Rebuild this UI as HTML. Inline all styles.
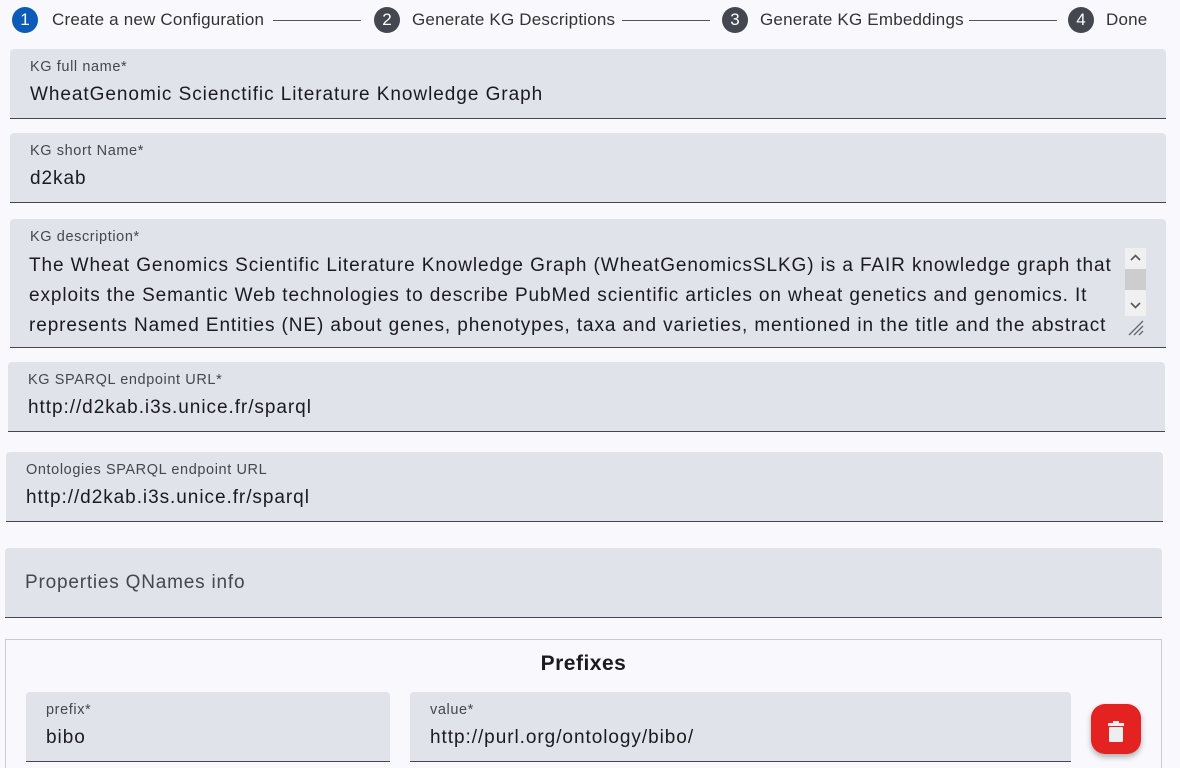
<!DOCTYPE html>
<html style="overflow:hidden;height:768px"><head><style>
body{margin:0;width:1180px;height:768px;overflow:hidden;background:#f9f9fd;font-family:"Liberation Sans",Arial,sans-serif;position:relative;color:#1b1b1f}
.c{position:absolute;top:7px;width:26px;height:26px;border-radius:50%;background:#44474f;color:#fff;font-size:17px;text-align:center;line-height:26px}
.t{position:absolute;top:10px;font-size:17px;color:#333;letter-spacing:0.2px}
.ln{position:absolute;top:20px;height:1px;background:#555}
.f{position:absolute;background:#e0e3ea;border-radius:4px 4px 0 0;border-bottom:1px solid #44474f;box-sizing:border-box}
.lb{position:absolute;left:20px;top:10px;font-size:14.5px;color:#44474f;letter-spacing:0.6px}
.v{position:absolute;left:20px;top:35px;font-size:19px;color:#1b1b1f;letter-spacing:0.95px}
</style></head><body>
<div class="c" style="left:12px;background:#0b5cb8">1</div><div class="t" style="left:52px">Create a new Configuration</div>
<div class="ln" style="left:273px;width:88px"></div>
<div class="c" style="left:374px">2</div><div class="t" style="left:412px">Generate KG Descriptions</div>
<div class="ln" style="left:622px;width:88px"></div>
<div class="c" style="left:722px">3</div><div class="t" style="left:760px">Generate KG Embeddings</div>
<div class="ln" style="left:969px;width:88px"></div>
<div class="c" style="left:1068px">4</div><div class="t" style="left:1106px">Done</div>

<div class="f" style="left:10px;top:49px;width:1156px;height:70px"><div class="lb">KG full name*</div><div class="v">WheatGenomic Scienctific Literature Knowledge Graph</div></div>
<div class="f" style="left:10px;top:133px;width:1156px;height:70px"><div class="lb">KG short Name*</div><div class="v">d2kab</div></div>
<div class="f" style="left:10px;top:219px;width:1156px;height:129px"><div class="lb">KG description*</div>
<div style="position:absolute;left:19px;top:32px;width:1100px;font-size:19px;line-height:30px;white-space:nowrap;overflow:hidden;letter-spacing:0.9px">The Wheat Genomics Scientific Literature Knowledge Graph (WheatGenomicsSLKG) is a FAIR knowledge graph that<br>exploits the Semantic Web technologies to describe PubMed scientific articles on wheat genetics and genomics. It<br>represents Named Entities (NE) about genes, phenotypes, taxa and varieties, mentioned in the title and the abstract</div>
<div style="position:absolute;left:1115px;top:29px;width:21px;height:68px;background:#f0f0f0"><div style="position:absolute;top:21px;width:21px;height:21px;background:#cdcdcd"></div>
<svg style="position:absolute;left:0;top:0" width="21" height="68"><path d="M6 12 L10.5 7.5 L15 12" stroke="#555" stroke-width="1.6" fill="none"/><path d="M6 55 L10.5 59.5 L15 55" stroke="#555" stroke-width="1.6" fill="none"/></svg></div>
<svg style="position:absolute;left:1117px;top:99px" width="20" height="20"><path d="M2 17 L16 3 M7 17 L16 8 M12 17 L16 13" stroke="#666" stroke-width="1.3"/></svg>
</div>
<div class="f" style="left:8px;top:362px;width:1157px;height:70px"><div class="lb">KG SPARQL endpoint URL*</div><div class="v">http://d2kab.i3s.unice.fr/sparql</div></div>
<div class="f" style="left:6px;top:452px;width:1157px;height:70px"><div class="lb">Ontologies SPARQL endpoint URL</div><div class="v">http://d2kab.i3s.unice.fr/sparql</div></div>
<div class="f" style="left:5px;top:548px;width:1157px;height:70px"><div style="position:absolute;left:20px;top:24px;font-size:19px;color:#44474f;letter-spacing:0.8px">Properties QNames info</div></div>
<div style="position:absolute;left:5px;top:639px;width:1155px;height:140px;border:1px solid #ccc"></div>
<div style="position:absolute;left:5px;top:652px;width:1157px;text-align:center;font-size:21px;font-weight:bold;letter-spacing:0.5px">Prefixes</div>
<div class="f" style="left:26px;top:692px;width:364px;height:70px"><div class="lb">prefix*</div><div class="v">bibo</div></div>
<div class="f" style="left:410px;top:692px;width:661px;height:70px"><div class="lb">value*</div><div class="v">http://purl.org/ontology/bibo/</div></div>
<div style="position:absolute;left:1091px;top:704px;width:50px;height:50px;border-radius:14px;background:#e52222;box-shadow:0 3px 6px rgba(0,0,0,.3)">
<svg width="50" height="50" viewBox="0 0 50 50"><rect x="17" y="19" width="16" height="3" fill="#eee"/><rect x="22" y="17" width="6" height="3" fill="#eee"/><rect x="18" y="23" width="14" height="15" rx="1" fill="#eee"/></svg></div>
</body></html>
